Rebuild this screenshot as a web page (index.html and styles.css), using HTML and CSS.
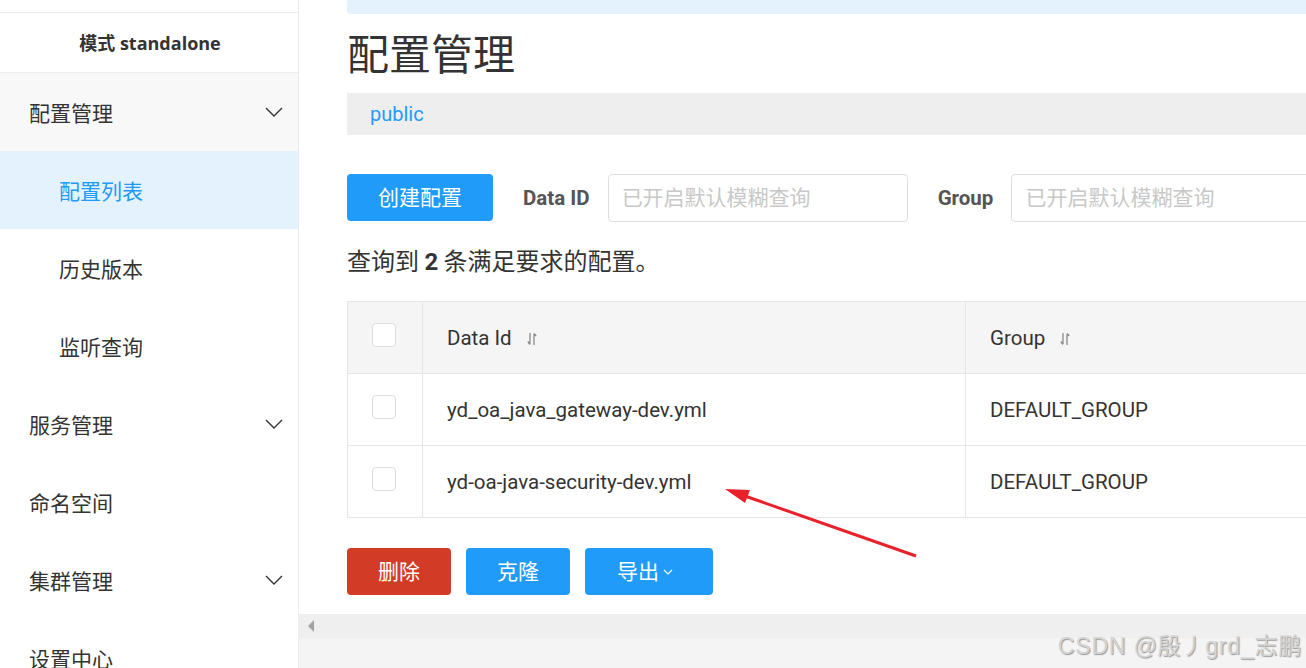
FILE: index.html
```html
<!DOCTYPE html>
<html lang="zh">
<head>
<meta charset="utf-8">
<title>配置管理</title>
<link rel="stylesheet" href="styles.css">
</head>
<body>
<div class="app">
  <aside class="sidebar">
    <div class="side-top"></div>
    <div class="side-head">模式 standalone</div>
    <nav class="menu">
      <div class="menu-item group">
        <span>配置管理</span>
        <svg class="chev" width="20" height="12" viewBox="0 0 20 12"><path d="M2 2 L10 10 L18 2" fill="none" stroke="#333" stroke-width="1.4"/></svg>
      </div>
      <div class="menu-item sub active"><span>配置列表</span></div>
      <div class="menu-item sub"><span>历史版本</span></div>
      <div class="menu-item sub"><span>监听查询</span></div>
      <div class="menu-item">
        <span>服务管理</span>
        <svg class="chev" width="20" height="12" viewBox="0 0 20 12"><path d="M2 2 L10 10 L18 2" fill="none" stroke="#333" stroke-width="1.4"/></svg>
      </div>
      <div class="menu-item"><span>命名空间</span></div>
      <div class="menu-item">
        <span>集群管理</span>
        <svg class="chev" width="20" height="12" viewBox="0 0 20 12"><path d="M2 2 L10 10 L18 2" fill="none" stroke="#333" stroke-width="1.4"/></svg>
      </div>
      <div class="menu-item"><span>设置中心</span></div>
    </nav>
  </aside>

  <main class="main">
    <div class="content">
      <div class="topbar"></div>
      <h1 class="title">配置管理</h1>
      <div class="ns-bar"><span class="ns">public</span></div>

      <div class="toolbar">
        <button class="btn btn-primary btn-create">创建配置</button>
        <label class="field-label">Data ID</label>
        <input class="field-input" type="text" placeholder="已开启默认模糊查询">
        <label class="field-label group-label">Group</label>
        <input class="field-input" type="text" placeholder="已开启默认模糊查询">
      </div>

      <p class="result">查询到 <strong>2</strong> 条满足要求的配置。</p>

      <div class="table">
        <div class="row head">
          <div class="cell check"><span class="checkbox"></span></div>
          <div class="cell">Data Id<svg class="sort" width="10" height="14" viewBox="0 0 10 14"><path d="M3 1 V12 M0.8 9.5 L3 12.5 M7 13 V2 M7 1.5 L9.2 4" fill="none" stroke="#8a8a8a" stroke-width="1.3"/></svg></div>
          <div class="cell">Group<svg class="sort" width="10" height="14" viewBox="0 0 10 14"><path d="M3 1 V12 M0.8 9.5 L3 12.5 M7 13 V2 M7 1.5 L9.2 4" fill="none" stroke="#8a8a8a" stroke-width="1.3"/></svg></div>
        </div>
        <div class="row">
          <div class="cell check"><span class="checkbox"></span></div>
          <div class="cell">yd_oa_java_gateway-dev.yml</div>
          <div class="cell">DEFAULT_GROUP</div>
        </div>
        <div class="row">
          <div class="cell check"><span class="checkbox"></span></div>
          <div class="cell">yd-oa-java-security-dev.yml</div>
          <div class="cell">DEFAULT_GROUP</div>
        </div>
      </div>

      <div class="actions">
        <button class="btn btn-danger btn-small">删除</button>
        <button class="btn btn-primary btn-small">克隆</button>
        <button class="btn btn-primary btn-export">导出<svg class="caret" width="10" height="6" viewBox="0 0 10 6"><path d="M1 1 L5 5 L9 1" fill="none" stroke="#fff" stroke-width="1.2"/></svg></button>
      </div>
    </div>
    <div class="hscroll"><span class="scroll-arrow"></span></div>
    <div class="under"></div>
  </main>
</div>

<svg class="annot" width="1306" height="668" viewBox="0 0 1306 668">
  <line x1="916" y1="556" x2="742" y2="495" stroke="#e8212b" stroke-width="3"/>
  <polygon points="725,489 750,490 745,503" fill="#e8212b"/>
</svg>
<div class="watermark">CSDN @殷丿grd_志鹏</div>
</body>
</html>
```

FILE: styles.css
```css
* { box-sizing: border-box; }

html, body {
  margin: 0;
  padding: 0;
  width: 1306px;
  height: 668px;
  overflow: hidden;
  background: #fff;
  font-family: Roboto, "Noto Sans CJK SC", sans-serif;
  color: #333;
}

.app {
  display: flex;
  width: 1306px;
  height: 668px;
  position: relative;
}

/* Sidebar */
.sidebar {
  width: 299px;
  flex: none;
  height: 668px;
  overflow: hidden;
  border-right: 1px solid #ececec;
  background: #fff;
}

.side-top {
  height: 13px;
  border-bottom: 1px solid #ececec;
}

.side-head {
  height: 60px;
  border-bottom: 1px solid #ececec;
  display: flex;
  align-items: center;
  justify-content: center;
  font-family: "Open Sans", "Noto Sans CJK SC", sans-serif;
  font-weight: 700;
  font-size: 18px;
  color: #333;
  padding: 0 0 2px 2px;
}

.menu-item {
  height: 78px;
  display: flex;
  align-items: center;
  justify-content: space-between;
  padding: 0 14px 0 29px;
  font-family: "Noto Sans CJK SC", sans-serif;
  font-size: 21px;
  color: #333;
}

.menu-item.group {
  background: #f8f8f8;
}

.menu-item.sub {
  padding-left: 59px;
}

.menu-item.active {
  background: #e4f2fd;
  color: #209bfa;
}

.chev {
  display: block;
}

/* Main */
.main {
  flex: 1;
  min-width: 0;
  display: flex;
  flex-direction: column;
  overflow: hidden;
}

.content {
  height: 614px;
  flex: none;
  padding-left: 48px;
  overflow: hidden;
}

.topbar {
  height: 14px;
  background: #e4f2fd;
  border-bottom-left-radius: 4px;
}

.title {
  margin: 0;
  padding-top: 2px;
  height: 79px;
  line-height: 72px;
  font-family: "Noto Sans CJK SC", sans-serif;
  font-weight: 400;
  font-size: 42px;
  color: #333;
}

.ns-bar {
  height: 42px;
  background: #eeeeee;
  display: flex;
  align-items: center;
  padding-left: 23px;
}

.ns {
  font-size: 20px;
  color: #209bfa;
}

.toolbar {
  margin-top: 39px;
  height: 47px;
  display: flex;
  align-items: center;
  white-space: nowrap;
}

.btn {
  height: 47px;
  border: none;
  border-radius: 4px;
  color: #fff;
  font-family: "Noto Sans CJK SC", sans-serif;
  font-size: 21px;
  padding: 0 0 4px;
  display: inline-flex;
  align-items: center;
  justify-content: center;
  flex: none;
}

.btn-primary { background: #209bfa; }
.btn-danger { background: #d23c26; }

.btn-create {
  width: 146px;
  margin-right: 30px;
}

.field-label {
  font-family: Roboto, sans-serif;
  font-weight: 700;
  font-size: 20.5px;
  color: #555;
  margin-right: 18px;
  flex: none;
}

.field-input {
  width: 300px;
  height: 48px;
  flex: none;
  border: 1px solid #dcdee3;
  border-radius: 4px;
  padding: 0 13px 4px;
  font-family: "Noto Sans CJK SC", sans-serif;
  font-size: 21px;
  color: #333;
  background: #fff;
  outline: none;
}

.field-input::placeholder {
  color: #c8c8c8;
}

.group-label {
  margin-left: 30px;
}

.result {
  margin: 24px 0 0;
  height: 30px;
  line-height: 30px;
  font-family: "Noto Sans CJK SC", sans-serif;
  font-size: 24px;
  color: #333;
}

.result strong {
  font-family: Roboto, sans-serif;
  font-weight: 700;
}

/* Table */
.table {
  margin-top: 26px;
  width: 1100px;
  border-top: 1px solid #e6e6e6;
  border-left: 1px solid #e6e6e6;
}

.row {
  display: grid;
  grid-template-columns: 75px 543px 1fr;
  height: 72px;
}

.row.head {
  background: #f5f5f5;
}

.cell {
  border-right: 1px solid #e6e6e6;
  border-bottom: 1px solid #e6e6e6;
  display: flex;
  align-items: center;
  padding-left: 24px;
  font-size: 20.5px;
  color: #333;
  white-space: nowrap;
}

.cell.check {
  align-items: flex-start;
  padding-top: 21px;
}

.checkbox {
  width: 24px;
  height: 24px;
  border: 1px solid #dcdee3;
  border-radius: 4px;
  background: #fff;
  display: block;
}

.sort {
  margin-left: 15px;
  margin-top: 2px;
}

/* Actions */
.actions {
  margin-top: 30px;
  display: flex;
  gap: 15px;
}

.btn-small { width: 104px; }

.btn-export {
  width: 128px;
  padding-right: 8px;
}

.caret {
  margin-left: 4px;
  margin-top: 4px;
}

/* bottom scrollbar */
.hscroll {
  height: 24px;
  flex: none;
  background: #efefef;
  display: flex;
  align-items: center;
  padding-left: 9px;
}

.scroll-arrow {
  width: 0;
  height: 0;
  border-top: 6px solid transparent;
  border-bottom: 6px solid transparent;
  border-right: 6px solid #a3a3a3;
}

.under {
  flex: 1;
  background: #f4f4f4;
}

/* overlays */
.annot {
  position: absolute;
  left: 0;
  top: 0;
  pointer-events: none;
}

.watermark {
  position: absolute;
  right: 4px;
  bottom: 7px;
  font-family: "Liberation Sans", "Noto Sans CJK SC", sans-serif;
  font-size: 23px;
  letter-spacing: 0.8px;
  color: #d4d4d4;
  text-shadow: 1px 1px 1px #9a9a9a;
  white-space: nowrap;
}
```
